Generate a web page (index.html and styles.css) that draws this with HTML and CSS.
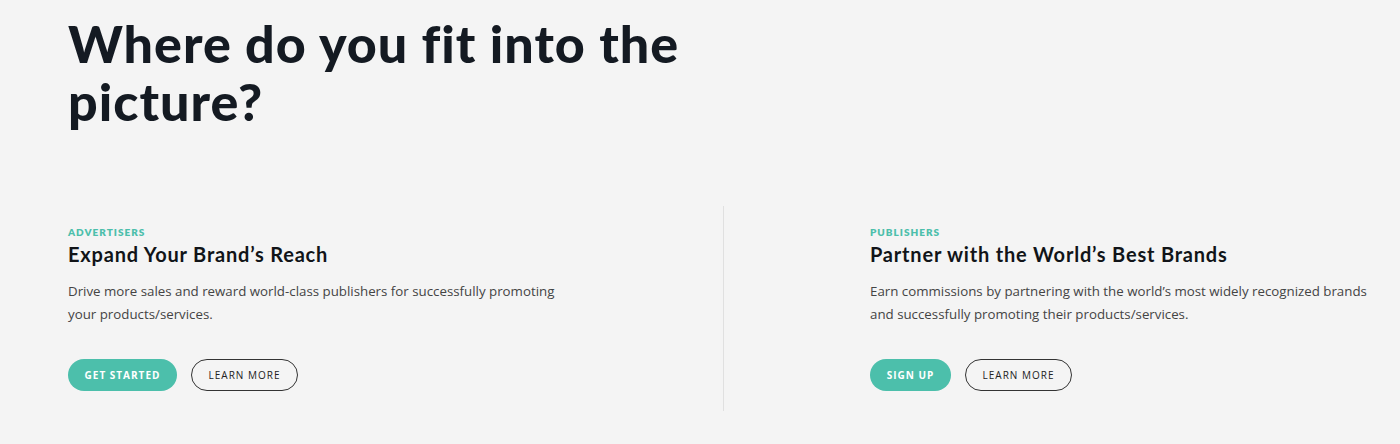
FILE: index.html
```html
<!DOCTYPE html>
<html>
<head>
<meta charset="utf-8">
<link rel="stylesheet" href="styles.css">
</head>
<body>
<main class="page">
  <h1 class="title">Where do you fit into the<br>picture?</h1>
  <section class="columns">
    <div class="col col-left">
      <div class="eyebrow">ADVERTISERS</div>
      <h2 class="col-title">Expand Your Brand’s Reach</h2>
      <p class="col-text">Drive more sales and reward world-class publishers for successfully promoting<br>your products/services.</p>
      <div class="actions">
        <a class="btn btn-fill btn-get">GET STARTED</a>
        <a class="btn btn-outline">LEARN MORE</a>
      </div>
    </div>
    <div class="col col-right">
      <div class="eyebrow">PUBLISHERS</div>
      <h2 class="col-title">Partner with the World’s Best Brands</h2>
      <p class="col-text">Earn commissions by partnering with the world’s most widely recognized brands<br>and successfully promoting their products/services.</p>
      <div class="actions">
        <a class="btn btn-fill btn-sign">SIGN UP</a>
        <a class="btn btn-outline">LEARN MORE</a>
      </div>
    </div>
  </section>
</main>
</body>
</html>
```
FILE: styles.css
```css
html, body {
  margin: 0;
  padding: 0;
  background: #f4f4f4;
}
.page {
  padding: 14px 0 0 68px;
  height: 430px;
}
.title {
  margin: 0;
  font-family: Lato, "Noto Sans", sans-serif;
  font-weight: 900;
  font-size: 52px;
  letter-spacing: 1px;
  line-height: 58px;
  color: #141a22;
}
.columns {
  display: flex;
  margin-top: 76px;
}
.col {
  padding-top: 20px;
  height: 185px;
}
.col-left {
  width: 655px;
  border-right: 1px solid #e0e0e0;
}
.col-right {
  padding-left: 146px;
}
.eyebrow {
  font-family: Lato, "Noto Sans", sans-serif;
  font-weight: 800;
  font-size: 10px;
  letter-spacing: 1px;
  color: #4cbfab;
  line-height: 12px;
}
.col-title {
  margin: 3px 0 0;
  font-family: Lato, "Noto Sans", sans-serif;
  font-weight: 700;
  font-size: 20px;
  letter-spacing: 0.8px;
  line-height: 26px;
  color: #111418;
}
.col-text {
  margin: 13px 0 0;
  font-family: "Open Sans", sans-serif;
  font-size: 13.3px;
  line-height: 23px;
  color: #444;
}
.actions {
  display: flex;
  gap: 14px;
  margin-top: 33px;
}
.btn {
  display: flex;
  align-items: center;
  justify-content: center;
  box-sizing: border-box;
  height: 32px;
  border-radius: 16px;
  font-family: "Open Sans", sans-serif;
  font-size: 10px;
  letter-spacing: 1px;
}
.btn-fill {
  background: #4cbfab;
  color: #fff;
  font-weight: 700;
}
.btn-get { width: 109px; }
.btn-sign { width: 81px; }
.btn-outline {
  width: 107px;
  border: 1px solid #333;
  color: #222;
  font-weight: 500;
}
```
